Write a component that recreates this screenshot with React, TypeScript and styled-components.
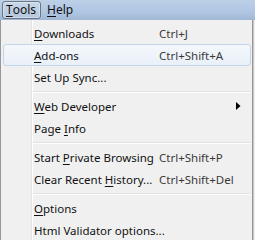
import React from 'react'
import styled, { createGlobalStyle } from 'styled-components'

const GlobalStyle = createGlobalStyle`
  html, body {
    margin: 0;
    padding: 0;
    background: #f0f0f0;
  }
  body {
    font-family: "Noto Sans", "Open Sans", sans-serif;
    font-size: 11.5px;
    color: #111;
  }
`

type Entry =
  | { kind: 'item'; label: React.ReactNode; shortcut?: string; hover?: boolean; submenu?: boolean }
  | { kind: 'sep' }

const entries: Entry[] = [
  { kind: 'item', label: <><Key>D</Key>ownloads</>, shortcut: 'Ctrl+J' },
  { kind: 'item', label: <><Key>A</Key>dd-ons</>, shortcut: 'Ctrl+Shift+A', hover: true },
  { kind: 'item', label: <>Set Up Sync...</> },
  { kind: 'sep' },
  { kind: 'item', label: <><Key>W</Key>eb Developer</>, submenu: true },
  { kind: 'item', label: <>Page <Key>I</Key>nfo</> },
  { kind: 'sep' },
  { kind: 'item', label: <>Start <Key>P</Key>rivate Browsing</>, shortcut: 'Ctrl+Shift+P' },
  { kind: 'item', label: <>Clear Recent <Key>H</Key>istory...</>, shortcut: 'Ctrl+Shift+Del' },
  { kind: 'sep' },
  { kind: 'item', label: <><Key>O</Key>ptions</> },
  { kind: 'item', label: <>Html Validator options...</> },
]

const App: React.FC = () => {
  return (
    <>
      <GlobalStyle />
      <Screen>
        <MenuBar>
          <MenuTitle $open>
            <Key>T</Key>ools
          </MenuTitle>
          <MenuTitle>
            <Key>H</Key>elp
          </MenuTitle>
        </MenuBar>
        <Dropdown>
          {entries.map((e, i) =>
            e.kind === 'sep' ? (
              <Separator key={i} />
            ) : (
              <Item key={i} $hover={e.hover}>
                <Label>{e.label}</Label>
                {e.shortcut && <Shortcut>{e.shortcut}</Shortcut>}
                {e.submenu && (
                  <Arrow width="5" height="8" viewBox="0 0 5 8">
                    <path d="M0 0 L4.5 4 L0 8 Z" fill="#000" />
                  </Arrow>
                )}
              </Item>
            )
          )}
        </Dropdown>
      </Screen>
    </>
  )
}

function Key({ children }: { children: React.ReactNode }) {
  return <Underlined>{children}</Underlined>
}

const Screen = styled.div`
  width: 255px;
  height: 240px;
  overflow: hidden;
  background: #f0f0f0;
`

const MenuBar = styled.div`
  display: flex;
  align-items: center;
  gap: 2px;
  height: 20px;
  padding: 0 0 0 2px;
  box-sizing: border-box;
  background: linear-gradient(to bottom, #bcd0e8 0%, #adc4e0 70%, #9fb6d4 100%);
`

const MenuTitle = styled.div<{ $open?: boolean }>`
  display: flex;
  align-items: center;
  height: 18px;
  padding: 0 4px 0 3px;
  box-sizing: border-box;
  border-radius: 3px;
  border: 1px solid ${(p) => (p.$open ? '#6b7785' : 'transparent')};
  background: ${(p) => (p.$open ? 'linear-gradient(to bottom, #c9d7e8, #b4c7df)' : 'transparent')};
  box-shadow: ${(p) => (p.$open ? 'inset 0 0 0 1px rgba(255,255,255,0.35)' : 'none')};
  font-size: 12px;
  line-height: 16px;
`

const Underlined = styled.span`
  text-decoration: underline;
  text-underline-offset: 2px;
`

const Dropdown = styled.div`
  display: flex;
  flex-direction: column;
  width: 253px;
  box-sizing: border-box;
  padding-top: 2px;
  border-left: 1px solid #979797;
  border-right: 1px solid #979797;
  box-shadow: 1px 0 0 #c8c8c8;
  background: linear-gradient(
    to right,
    #f0f0f0 30px,
    #e2e3e3 30px,
    #e2e3e3 31px,
    #ffffff 31px,
    #ffffff 32px,
    #f0f0f0 32px
  );
`

const Item = styled.div<{ $hover?: boolean }>`
  position: relative;
  display: flex;
  align-items: center;
  height: 22px;
  box-sizing: border-box;
  margin: 0 1px 0 2px;
  padding-left: 30px;
  border-radius: 3px;
  border: 1px solid ${(p) => (p.$hover ? '#c3d5ea' : 'transparent')};
  background: ${(p) => (p.$hover ? 'linear-gradient(to bottom, #f4f8fc, #e9f0f8)' : 'transparent')};
  white-space: nowrap;
`

const Label = styled.span`
  width: 125px;
  flex: none;
`

const Shortcut = styled.span`
  color: #3a3a3a;
`

const Arrow = styled.svg`
  position: absolute;
  right: 9px;
  top: 6px;
`

const Separator = styled.div`
  height: 7px;
  margin-left: 32px;
  margin-right: 2px;
  background: linear-gradient(
    to bottom,
    transparent 3px,
    #e0e0e0 3px,
    #e0e0e0 4px,
    #ffffff 4px,
    #ffffff 5px,
    transparent 5px
  );
`

export default App
